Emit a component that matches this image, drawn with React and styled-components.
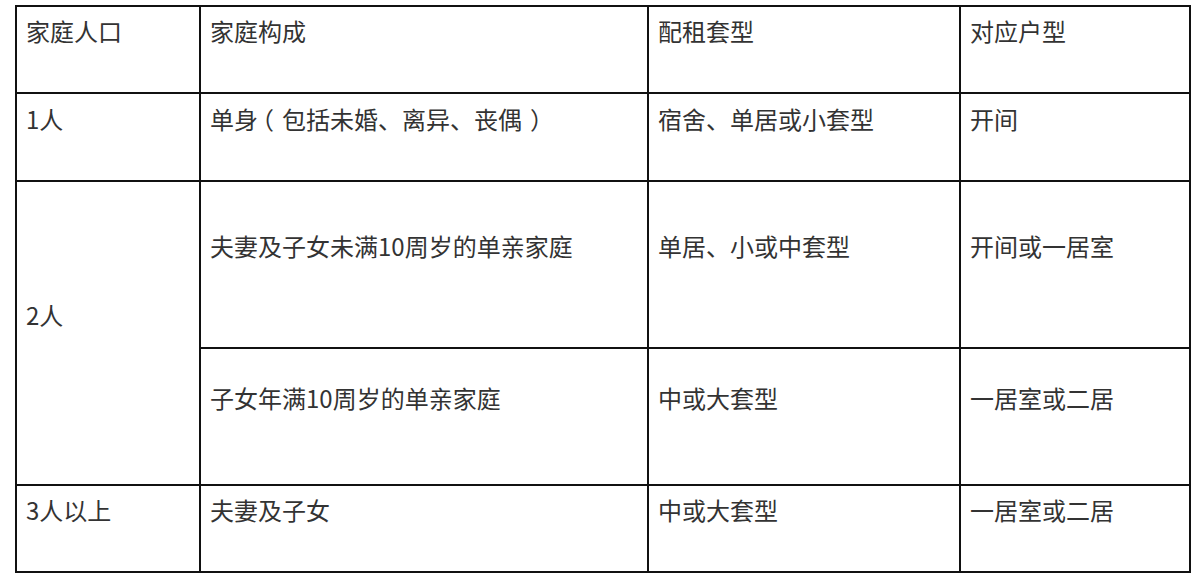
import React from 'react';
import styled, { createGlobalStyle } from 'styled-components';

const GlobalStyle = createGlobalStyle`
  html, body {
    margin: 0;
    padding: 0;
    background: #ffffff;
  }
  body {
    font-family: "Noto Sans CJK SC", "Noto Sans", sans-serif;
  }
`;

const Page = styled.div`
  padding: 5px 0 0 15px;
`;

const Table = styled.table`
  border-collapse: collapse;
  table-layout: fixed;
  width: 1174px;
  color: #333333;
  font-size: 24px;
  line-height: 31px;
`;

const Row = styled.tr`
  height: ${(p) => p.$h}px;
`;

const Cell = styled.td`
  border: 2px solid #111111;
  padding: 8px 10px 46px 9px;
  vertical-align: middle;
  text-align: left;
  white-space: nowrap;
`;

/* the source centres full-width brackets in their box: kern around them */
const Kern = styled.span`
  letter-spacing: ${(p) => p.$s}px;
`;

const cols = [184, 448, 312, 230];

const rows = [
  { h: 85, cells: [{ t: '家庭人口' }, { t: '家庭构成' }, { t: '配租套型' }, { t: '对应户型' }] },
  {
    h: 88,
    cells: [
      { t: '1人' },
      {
        t: (
          <>
            单<Kern $s={-8}>身</Kern>
            <Kern $s={8}>（</Kern>包括未婚、离异、丧<Kern $s={8}>偶</Kern>
            <Kern $s={-8}>）</Kern>
          </>
        ),
      },
      { t: '宿舍、单居或小套型' },
      { t: '开间' },
    ],
  },
  {
    h: 167,
    cells: [
      { t: '2人', span: 2 },
      { t: '夫妻及子女未满10周岁的单亲家庭' },
      { t: '单居、小或中套型' },
      { t: '开间或一居室' },
    ],
  },
  { h: 137, cells: [{ t: '子女年满10周岁的单亲家庭' }, { t: '中或大套型' }, { t: '一居室或二居' }] },
  { h: 86, cells: [{ t: '3人以上' }, { t: '夫妻及子女' }, { t: '中或大套型' }, { t: '一居室或二居' }] },
];

export default function App() {
  return (
    <>
      <GlobalStyle />
      <Page>
        <Table>
          <colgroup>
            {cols.map((w, i) => (
              <col key={i} style={{ width: w }} />
            ))}
          </colgroup>
          <tbody>
            {rows.map((r, i) => (
              <Row key={i} $h={r.h}>
                {r.cells.map((c, j) => (
                  <Cell key={j} rowSpan={c.span}>
                    {c.t}
                  </Cell>
                ))}
              </Row>
            ))}
          </tbody>
        </Table>
      </Page>
    </>
  );
}
